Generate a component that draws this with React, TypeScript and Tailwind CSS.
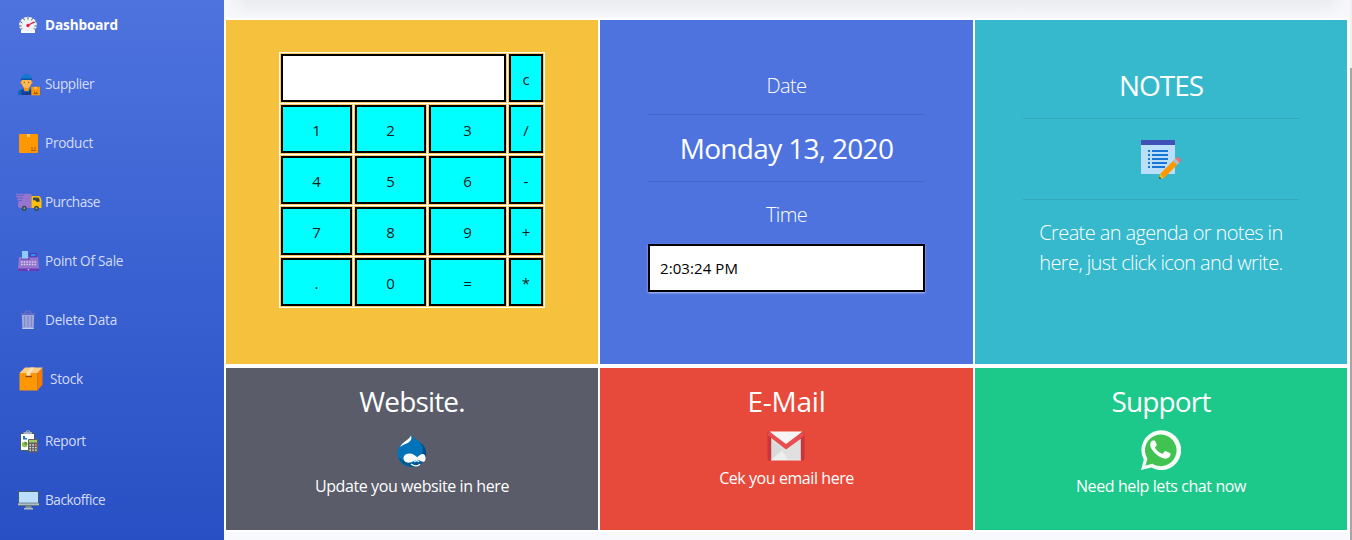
import React from 'react';

type IconProps = { children: React.ReactNode; className: string; viewBox: string };
const Icon = ({ children, className, viewBox }: IconProps) => (
  <svg className={`shrink-0 ${className}`} viewBox={viewBox} fill="none">{children}</svg>
);

const Gauge = () => (
  <Icon viewBox="0 0 20 18" className="ml-[18px] h-[18px] w-5">
    <path d="M3 17h14v-3c2.600-3 2.400-7.500-.2-10.300A9.300 9.300 0 0 0 3.200 3.700C.6 6.500.400 11 3 14Z" fill="#eef1f5" />
    <path d="M3 15h14v1.800H3Z" fill="#fff" />
    <path d="M10 1v2.500M5.500 2.300l1 2M14.500 2.300l-1 2M2.200 5.500 4.300 7M17.800 5.500 15.700 7M1 10h2.500M19 10h-2.500M2.300 13.300l2-.8M17.700 13.300l-2-.8" stroke="#465159" strokeWidth=".9" />
    <path d="m10 9.300 6-3.200" stroke="#e91e45" strokeWidth="1.300" />
    <circle cx="10" cy="9.500" r="1.700" fill="#e91e45" />
  </Icon>
);

const Worker = () => (
  <Icon viewBox="0 0 22 23" className="ml-[18px] h-[23px] w-[22px]">
    <path d="M0 22v-2.500c0-2 3-3.500 5.500-4h6c3 .6 5 2 5 4V22Z" fill="#1565c0" />
    <path d="M5.500 14h6l-1 4h-4Z" fill="#ff9800" />
    <path d="M3.500 22v-5h2v2h6v-2h2v5Z" fill="#153e90" />
    <circle cx="3.700" cy="9.500" r="1.200" fill="#ffa726" /><circle cx="13.300" cy="9.500" r="1.200" fill="#ffa726" />
    <path d="M3.800 6h9.400v4c0 3-2.200 5-4.700 5S3.800 13 3.800 10Z" fill="#ffb74d" />
    <path d="M2.500 7C2.500 3.500 4.500 1.500 7 1l1.500-1L10 1c2.500.5 4.500 2.500 4.500 6Z" fill="#1976d2" />
    <path d="M3 5.500h11V7H3Z" fill="#0d559f" />
    <circle cx="6.300" cy="9.300" r=".6" fill="#784719" /><circle cx="10.700" cy="9.300" r=".6" fill="#784719" />
    <path d="M13.300 13.800H22v8.500h-8.700Z" fill="#ff9800" /><path d="M16.500 13.800h2.300v2.400h-2.300Z" fill="#ffc978" />
    <path d="M16.500 18.500v2M18.700 18.500v2M15.800 20.700h4" stroke="#7b4c16" strokeWidth=".8" />
  </Icon>
);

const FlatBox = () => (
  <Icon viewBox="0 0 19 19" className="ml-[19px] h-[19px] w-[19px]">
    <rect width="19" height="19" rx="1" fill="#ff9800" /><path d="M8 0h3v3.500l-1.500-.8L8 3.500Z" fill="#ffcc80" />
    <path d="M13 13v2.500M16 13v2.500M12 16.500h5" stroke="#a75e08" strokeWidth="1" />
  </Icon>
);

const Truck = () => (
  <Icon viewBox="0 0 26 18" className="ml-4 h-[18px] w-[26px]">
    <path d="M0 .8h14.500c.6 0 1 .4 1 1V15H4l-2-1V8.500L0 2.500Z" fill="#9575cd" />
    <path d="M0 2.300h8M0 4.900h7M0 7.500h6M0 10h3" stroke="#4d5fcf" strokeWidth=".8" />
    <path d="M15.500 3H22c2.200 0 3.500 2.600 3.500 5v7h-10Z" fill="#ffc107" />
    <path d="M18 4.500h3.800c1.200 0 2 2 2 4l-2.800.8-2-2h-2V5.500c0-.6.400-1 1-1Z" fill="#37474f" />
    <circle cx="8.300" cy="15.200" r="2.500" fill="#37474f" /><circle cx="8.300" cy="15.200" r="1" fill="#90a4ae" />
    <circle cx="20.500" cy="15.200" r="2.500" fill="#37474f" /><circle cx="20.500" cy="15.200" r="1" fill="#90a4ae" />
  </Icon>
);

const Register = () => (
  <Icon viewBox="0 0 21 21" className="ml-[18px] h-[21px] w-[21px]">
    <path d="M1 6h19l1 12H0Z" fill="#9575cd" /><path d="M0 17.500h21V20H0Z" fill="#673ab7" />
    <path d="M11.500 2h7.300v4.500h-7.300ZM3.500 7h8v1.500h-8Z" fill="#5e35b1" /><path d="M13 3h4.500v2.200H13Z" fill="#2196f3" />
    <path d="M4 0h6v7.700H4Z" fill="#90caf9" />
    <path d="M3 11h15M3 13.500h15" stroke="#ddd3ee" strokeWidth="1.300" strokeDasharray="1.500 1.200" />
    <circle cx="10.500" cy="18.800" r=".8" fill="#dad1ef" />
  </Icon>
);

const Trash = () => (
  <Icon viewBox="0 0 16 20" className="ml-5 h-5 w-4">
    <path d="M4.500 3.500 6 1h4l1.500 2.500" stroke="#6672c5" strokeWidth="1.200" /><path d="M1 3h14v1.800H1Z" fill="#626dc1" />
    <path d="M1.800 5h12.400l-.6 14H2.400Z" fill="#9fa8da" />
    <path d="M4.700 6v11M8 6v11M11.300 6v11" stroke="#6f7bc6" strokeWidth=".8" /><path d="M2.300 18h11.400v1H2.300Z" fill="#c5cae9" />
  </Icon>
);

const OpenBox = () => (
  <Icon viewBox="0 0 24 24" className="ml-[19px] h-6 w-6">
    <path d="M.5 6h18v17.500H.5Z" fill="#ff9800" /><path d="M18.500 6 23.500.5v17l-5 6Z" fill="#f57c00" />
    <path d="M.5 6 6 .5h17.500l-5 5.500Z" fill="#ffcc80" /><path d="m11.500.5-4 5.500v3h4V6l4-5.500Z" fill="#ffe0b2" />
    <path d="M6.500 9.500H13" stroke="#8b4b13" strokeWidth="1.500" />
  </Icon>
);

const Report = () => (
  <Icon viewBox="0 0 20 24" className="ml-[19px] h-6 w-5">
    <rect x="1" y="4" width="15" height="18" rx="1" fill="#445a64" /><path d="M2 5h13v16H2Z" fill="#fff" />
    <path d="M4.500 5V3h2.200c.2-2.700 4.400-2.700 4.600 0H13v2Z" fill="#9db0bb" /><circle cx="9" cy="2.300" r=".8" fill="#35679e" />
    <path d="M4 7v3.500h4V9H6V7Z" fill="#1976d2" /><circle cx="5.700" cy="15.500" r="2.700" fill="#8bc34a" /><path d="M5.700 15.500v-2.700c2 0 2.700 1.500 2.700 2.700Z" fill="#558b2f" />
    <rect x="9" y="10" width="10" height="13.500" rx=".7" fill="#616161" /><path d="M10 11h8v2.500h-8Z" fill="#9ccc65" />
    <path d="M10.500 16h7.300M10.500 18.600h7.300M10.500 21.200h7.300" stroke="#eee" strokeWidth="1.300" strokeDasharray="1.500 1.300" /><path d="M16.200 15.300h1.600v1.500h-1.600Z" fill="#f44336" />
  </Icon>
);

const Monitor = () => (
  <Icon viewBox="0 0 21 19" className="ml-[18px] h-[19px] w-[21px]">
    <rect width="21" height="15" rx=".8" fill="#455a64" /><path d="M1 1h19v10.700H1Z" fill="#bbdefb" />
    <path d="M0 12.300h21v2H0Z" fill="#b0bec5" /><path d="M8 15h5l1.500 2.500h-8Z" fill="#78909c" /><path d="M6 17h9v1.500H6Z" fill="#b0bec5" />
  </Icon>
);

const Notes = () => (
  <Icon viewBox="0 0 41 40" className="h-10 w-[41px]">
    <path d="M0 1c0-.6.400-1 1-1h32c.6 0 1 .4 1 1v33H0Z" fill="#bbdefb" /><path d="M0 1c0-.6.400-1 1-1h32c.6 0 1 .4 1 1v4H0Z" fill="#3f51b5" />
    <path d="M7 11h2m2 0h16M7 15h2m2 0h16M7 19h2m2 0h16M7 23h2m2 0h15M7 27h2m2 0h13" stroke="#1976d2" strokeWidth="2" />
    <path d="m19 34 15-15 4 4-15 15Z" fill="#ff9800" /><path d="m32 21 3-3 4 4-3 3Z" fill="#b0bec5" />
    <path d="m34.500 18.500 1-1c.7-.7 1.800-.7 2.500 0l1.700 1.700c.7.700.7 1.600 0 2.300L38.500 22.500Z" fill="#e57373" />
    <path d="m19 34 4 4-5 1Z" fill="#ffc107" /><path d="m18.500 36.500 2 2L18 39Z" fill="#37474f" />
  </Icon>
);

const Drop = () => (
  <Icon viewBox="0 0 30 32" className="h-8 w-[30px]">
    <path d="M14.500 0c2 3.300 4.500 4.500 8 6.700 4 2.700 6.500 6.700 6.500 11.300 0 8-6.500 14-14.500 14S.5 26 .5 18.300c0-4.300 2.300-8.500 6.500-11.300 3.500-2.200 6-4 7.500-7Z" fill="#0073ba" />
    <path d="M22 7c5 4 5 12 0 15.500 2 0 5 .5 6 2A14 14 0 0 0 29 18c0-4.700-2.500-8.500-7-11Z" fill="#004c89" />
    <path d="M1.500 22C4 29 9 31 14.500 32c6.500 0 11.500-3.700 13.500-8.500-5 5-18 7-26.500-1.500Z" fill="#00588f" />
    <path d="M14 .5c1.500 4-1 6.500-4.500 8-2.400 1-4.700 2-6.300 3.700C5 6.500 11.500 6 14 .5Z" fill="#fff" />
    <path d="M12 18.500c4 0 6.200 2 8.300 3.700 2.200-2 4.600-4 6.700-2.800 2 1.300 2 5.200.6 6.900-2 1.800-5.200-1.700-7.400-1.500-2.700.1-5 2.900-8.700 2.900-6.500 0-7-9.200.5-9.200Z" fill="#fff" />
    <path d="M14 29c3 2.500 6.500 2.300 9 .2M17.500 27c1-1.800 3.500-1.700 4.600 0" stroke="#fff" strokeWidth="1.200" />
  </Icon>
);

const Gmail = () => (
  <Icon viewBox="0 0 38 30" className="h-[30px] w-[38px]">
    <rect x=".5" y=".7" width="37" height="29" rx="2" fill="#cf3339" /><path d="M4 3h30v26H4Z" fill="#e0e0e0" />
    <path d="M3 1h32L19 14Z" fill="#f5f5f5" /><path d="m4 29 11-9 6 9Z" fill="#eeeeee" /><path d="m4 9 11 9-11 11Z" fill="#d9d9d9" />
    <path d="M1 4.500V3c0-1.200 1-2 2-2l16 12L35 1c1.200 0 2 .8 2 2v2.500L19 18.500Z" fill="#e84d4f" />
    <path d="M1.200 5 4.200 7v21.700H1.200ZM36.800 5l-3 2v21.700h3Z" fill="#c6363d" />
    <path d="M3 .7h32M4 29.300h30" stroke="#fafafa" strokeOpacity=".8" strokeWidth=".8" />
  </Icon>
);

const WhatsApp = () => (
  <Icon viewBox="0 0 40 40" className="h-10 w-10">
    <path d="m0 40 2.800-10.300A19.900 19.900 0 1 1 10.500 37.500Z" fill="#f8fcf8" />
    <path d="m4.500 35.500 1.900-6.700A15.800 15.800 0 1 1 11.300 33.700Z" fill="#40c351" />
    <path d="M14.300 11.200c-.4-.8-.8-.8-1.300-.8h-1c-.4 0-1 .2-1.500.8-2 2.100-1.600 5.300.3 8.100 2.300 3.500 5.600 6.700 9.300 8.200 4 1.700 5.800 1.200 7.300.3 1.600-1 2.100-2.600 2.100-3.900 0-.6-.5-.8-1.200-1.100l-3.400-1.600c-.6-.3-1-.3-1.400.3l-1.500 1.900c-.3.400-.7.500-1.200.2-3.300-1.300-5.700-3.900-6.600-5.600-.3-.5 0-.8.300-1.200l1-1.300c.3-.4.300-.7.100-1.200Z" fill="#fff" />
  </Icon>
);

const nav = [
  { label: 'Dashboard', icon: <Gauge />, row: 'h-[50px]', text: 'font-bold text-white text-[13.600px] tracking-[-0.120px]' },
  { label: 'Supplier', icon: <Worker />, row: 'h-[68px]', text: 'text-[13.600px] tracking-[-0.430px]' },
  { label: 'Product', icon: <FlatBox />, row: 'h-[50px]', text: 'text-[13.600px] tracking-[-0.280px]' },
  { label: 'Purchase', icon: <Truck />, row: 'h-[68px]', text: 'text-[13.600px] tracking-[-0.450px]' },
  { label: 'Point Of Sale', icon: <Register />, row: 'h-[50px]', text: 'text-[13.600px] tracking-[-0.230px]' },
  { label: 'Delete Data', icon: <Trash />, row: 'h-[68px]', text: 'text-[13.600px] tracking-[-0.220px]' },
  { label: 'Stock', icon: <OpenBox />, row: 'h-[50px]', text: 'pl-[5px] text-[13.600px] tracking-[-0.230px]' },
  { label: 'Report', icon: <Report />, row: 'h-[74px]', text: 'text-[13.600px] tracking-[-0.340px]' },
  { label: 'Backoffice', icon: <Monitor />, row: 'h-[44px]', text: 'text-[13.600px] tracking-[-0.480px]' },
];

const keys = ['1', '2', '3', '/', '4', '5', '6', '-', '7', '8', '9', '+', '.', '0', '=', '*'];
const Key = ({ value }: { value: string }) => (
  <button className="flex h-[50px] items-center justify-center border border-[#f9cd62] bg-black p-[2px]">
    <span className="flex h-full w-full items-center justify-center bg-[#00ffff] pt-[2px] text-[15px] text-[#102020]">{value}</span>
  </button>
);

export default function App() {
  return (
    <div className="flex h-[540px] w-[1352px] overflow-hidden bg-[#f8f9fc] font-['Open_Sans','Noto_Sans',sans-serif]">
      <aside className="flex w-[224px] shrink-0 flex-col bg-linear-to-b from-[#4e73df] to-[#2850c4]">
        {nav.map((n) => (
          <div key={n.label} className={`flex shrink-0 items-center ${n.row}`}>
            <div className="flex w-[45px] shrink-0 items-center">{n.icon}</div>
            <span className={`whitespace-nowrap ${n.label === 'Dashboard' ? 'pt-px' : 'pt-px text-[#d3dcf7]'} ${n.text}`}>{n.label}</span>
          </div>
        ))}
      </aside>
      <main className="flex w-[1126px] shrink-0 flex-col">
        <div className="flex h-[18px] shrink-0 bg-linear-to-b from-[#ebecf0] to-[#f7f8fb]">
          <div className="w-6 bg-linear-to-r from-[#f8f9fc] to-transparent" />
          <div className="ml-auto w-6 bg-linear-to-l from-[#f8f9fc] to-transparent" />
        </div>
        <div className="grid h-[514px] w-[1125px] shrink-0 grid-cols-[372px_373px_372px] grid-rows-[344px_162px] gap-x-[2px] gap-y-1 bg-white p-[2px]">
          <section className="bg-[#f6c23e] pt-[32px] pl-[53px]">
            <div className="grid w-[266px] grid-cols-[73px_73px_79px_36px] gap-[1px] border border-[#fffbed] bg-white">
              <div className="col-span-3 border border-[#f9cd62] bg-black p-[2px]"><div className="h-[44px] bg-white" /></div>
              <Key value="c" />
              {keys.map((k) => <Key key={k} value={k} />)}
            </div>
          </section>
          <section className="flex flex-col bg-[#4e73df] px-12 text-center text-white">
            <p className="mt-[51px] h-[43px] text-xl leading-[30px] font-light tracking-[-0.600px]">Date</p>
            <hr className="border-[#4667c9]" />
            <p className="h-[66px] pt-4 text-[28px] leading-[34px] tracking-[-0.680px]">Monday 13, 2020</p>
            <hr className="border-[#4667c9]" />
            <p className="h-[62px] pt-[18px] text-xl leading-[30px] font-light tracking-[-0.700px]">Time</p>
            <div className="flex h-12 items-center border-2 border-black bg-white pl-[10px] text-[15px] tracking-[0.080px] text-black shadow-[0_1px_2px_#ffffff90]">2:03:24 PM</div>
          </section>
          <section className="flex flex-col items-center bg-[#36b9cc] px-12 text-center text-white">
            <h2 className="mt-12 h-[50px] text-[28px] leading-[34px] tracking-[-1px]">NOTES</h2>
            <hr className="w-full border-[#31a7b8]" />
            <div className="flex h-20 w-full justify-center pt-[21px]"><Notes /></div>
            <hr className="w-full border-[#31a7b8]" />
            <p className="mt-[18px] text-xl leading-[30px] font-light tracking-[-0.610px] whitespace-nowrap">Create an agenda or notes in<br />here, just click icon and write.</p>
          </section>
          <section className="flex flex-col items-center bg-[#5a5c69] pt-4 text-white">
            <h2 className="text-[28px] leading-[34px] tracking-[-0.850px]">Website.</h2><div className="mt-[17px]"><Drop /></div>
            <p className="mt-[7px] text-base leading-6 tracking-[-0.400px]">Update you website in here</p>
          </section>
          <section className="flex flex-col items-center bg-[#e74a3b] pt-4 text-white">
            <h2 className="text-[28px] leading-[34px] tracking-[-0.250px]">E-Mail</h2><div className="mt-[13px] mr-[2px]"><Gmail /></div>
            <p className="mt-[5px] text-base leading-6 tracking-[-0.430px]">Cek you email here</p>
          </section>
          <section className="flex flex-col items-center bg-[#1cc88a] pt-4 text-white">
            <h2 className="text-[28px] leading-[34px] tracking-[-0.850px]">Support</h2><div className="mt-3"><WhatsApp /></div>
            <p className="mt-1 text-base leading-6 tracking-[-0.400px]">Need help lets chat now</p>
          </section>
        </div>
      </main>
      <div className="flex w-[2px] shrink-0 flex-col bg-[#a6a6a6]"><div className="h-[68px] bg-[#f1f1f1]" /></div>
    </div>
  );
}
